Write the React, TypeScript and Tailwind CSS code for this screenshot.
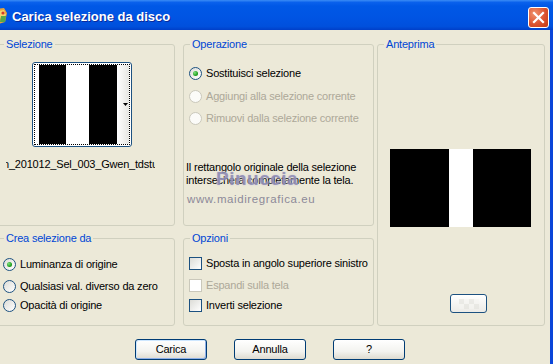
import React from "react";

function Radio({ checked = false, disabled = false }: { checked?: boolean; disabled?: boolean }) {
  return (
    <span
      className={
        disabled
          ? "w-[13px] h-[13px] rounded-full border border-[#cac8bb] bg-[#fbfbf8] flex items-center justify-center shrink-0"
          : "w-[13px] h-[13px] rounded-full border border-[#1c5180] bg-[linear-gradient(135deg,#dcdcd7,#ffffff)] flex items-center justify-center shrink-0"
      }
    >
      {checked && (
        <span className="w-[5px] h-[5px] rounded-full bg-[radial-gradient(circle_at_35%_35%,#7fe07f,#21a121_60%,#0e7a0e)]" />
      )}
    </span>
  );
}

function Check({ disabled = false }: { disabled?: boolean }) {
  return (
    <span
      className={
        disabled
          ? "w-[13px] h-[13px] border border-[#cac8bb] bg-white shrink-0"
          : "w-[13px] h-[13px] border border-[#1c5180] bg-[linear-gradient(135deg,#dcdcd7,#ffffff)] shrink-0"
      }
    />
  );
}

function Legend({ children }: { children: React.ReactNode }) {
  return <legend className="ml-[6px] px-[2px] leading-[13px] text-[#0046d5]">{children}</legend>;
}

function XPButton({ children, def = false }: { children: React.ReactNode; def?: boolean }) {
  return (
    <div
      className={
        def
          ? "w-[72px] h-[21px] border border-[#003c74] rounded-[3px] bg-[linear-gradient(180deg,#ffffff,#f3f3ef_60%,#dedbd0)] shadow-[inset_1px_1px_0_#cee7ff,inset_-1px_-1px_0_#8fb0e8] flex items-center justify-center text-black"
          : "w-[72px] h-[21px] border border-[#003c74] rounded-[3px] bg-[linear-gradient(180deg,#ffffff,#f3f3ef_60%,#dedbd0)] flex items-center justify-center text-black"
      }
    >
      {children}
    </div>
  );
}

export default function App() {
  return (
    <div className="w-[553px] h-[364px] overflow-hidden flex flex-col bg-[#ece9d8] font-['Liberation_Sans',Arial,sans-serif] text-[11px] tracking-[-0.2px] text-black">
      {/* Title bar */}
      <div className="h-[30px] shrink-0 flex items-start bg-[linear-gradient(180deg,#3b8cf5_0%,#0a61ec_8%,#0058e6_20%,#0054e3_60%,#0050dc_88%,#003fc8_100%)]">
        <svg width="16" height="18" viewBox="0 0 16 18" className="ml-[-8px] mt-[7px] shrink-0">
          <path d="M3 2 L12 1 L15 6 L13 15 L6 17 L1 11 Z" fill="#e8a33a" />
          <path d="M6 4 L12 3 L14 8 L10 12 L5 10 Z" fill="#f6d36b" />
          <path d="M9 9 L14 9 L13 15 L8 15 Z" fill="#57a84a" />
          <circle cx="11" cy="6" r="1.6" fill="#d23b2a" />
        </svg>
        <div className="ml-[4px] mt-[9px] text-[13px] leading-[15px] font-bold text-white tracking-[0px] [text-shadow:1px_1px_0_#0a2a9a]">
          Carica selezione da disco
        </div>
        <div className="flex-1" />
        <div className="mt-[7px] mr-[4px] w-[21px] h-[21px] rounded-[3px] border border-white bg-[radial-gradient(circle_at_30%_30%,#f0946e,#dc5330_55%,#c23a12)] flex items-center justify-center">
          <svg width="13" height="13" viewBox="0 0 13 13">
            <path d="M2 2 L11 11 M11 2 L2 11" stroke="white" strokeWidth="2.2" strokeLinecap="square" />
          </svg>
        </div>
      </div>

      {/* Body */}
      <div className="flex-1 flex border-r-[3px] border-[#0b45d9]">
        <div className="flex-1 flex flex-col pt-[8px]">
          <div className="flex">
            {/* Left column */}
            <div className="ml-[-3px] w-[178px] flex flex-col gap-[6px] shrink-0">
              <fieldset className="h-[188px] border border-[#d0d0bf] rounded-[3px]">
                <Legend>Selezione</Legend>
                <div className="flex flex-col">
                  <div className="ml-[34px] mt-[11px] w-[100px] h-[85px] border border-[#1c5180] rounded-[3px] bg-white p-[1px]">
                    <div className="w-full h-full border border-dotted border-black flex pl-[4px]">
                      <div className="w-[27px] bg-black" />
                      <div className="w-[23px] bg-white" />
                      <div className="w-[28px] bg-black" />
                      <div className="flex-1 bg-[linear-gradient(90deg,#ffffff,#e6e6e2)] flex items-center justify-end pr-[1px]">
                        <svg width="5" height="3" viewBox="0 0 5 3">
                          <path d="M0 0 H5 L2.5 3 Z" fill="#000" />
                        </svg>
                      </div>
                    </div>
                  </div>
                  <div className="ml-[8px] mt-[11px] w-[149px] overflow-hidden whitespace-nowrap leading-[13px]">
                    <span className="ml-[-3px]">n_201012_Sel_003_Gwen_tdstudio</span>
                  </div>
                </div>
              </fieldset>
              <fieldset className="h-[94px] border border-[#d0d0bf] rounded-[3px]">
                <Legend>Crea selezione da</Legend>
                <div className="flex flex-col pl-[5px]">
                  <div className="mt-[13px] h-[13px] flex items-center gap-[4px]">
                    <Radio checked />
                    <span className="leading-[13px]">Luminanza di origine</span>
                  </div>
                  <div className="mt-[9px] h-[13px] flex items-center gap-[4px]">
                    <Radio />
                    <span className="leading-[13px]">Qualsiasi val. diverso da zero</span>
                  </div>
                  <div className="mt-[6px] h-[13px] flex items-center gap-[4px]">
                    <Radio />
                    <span className="leading-[13px]">Opacità di origine</span>
                  </div>
                </div>
              </fieldset>
            </div>

            {/* Middle column */}
            <div className="ml-[8px] w-[191px] flex flex-col gap-[6px] shrink-0">
              <fieldset className="relative h-[188px] border border-[#d0d0bf] rounded-[3px]">
                <Legend>Operazione</Legend>
                <div className="flex flex-col pl-[5px]">
                  <div className="mt-[16px] h-[13px] flex items-center gap-[4px]">
                    <Radio checked />
                    <span className="leading-[13px]">Sostituisci selezione</span>
                  </div>
                  <div className="mt-[10px] h-[13px] flex items-center gap-[4px]">
                    <Radio disabled />
                    <span className="leading-[13px] text-[#aca899]">Aggiungi alla selezione corrente</span>
                  </div>
                  <div className="mt-[9px] h-[13px] flex items-center gap-[4px]">
                    <Radio disabled />
                    <span className="leading-[13px] text-[#aca899]">Rimuovi dalla selezione corrente</span>
                  </div>
                  <div className="ml-[-3px] mt-[36px] leading-[13px] whitespace-nowrap">
                    Il rettangolo originale della selezione
                    <br />
                    intersecherà completamente la tela.
                  </div>
                </div>
                <div className="absolute left-[32px] top-[118px] text-[19px] font-bold tracking-[0.5px] text-[#7d7aa8]/70 leading-[20px] [text-shadow:0_0_2px_#c8c6dc]">
                  Pinuccia
                </div>
                <div className="absolute left-[3px] top-[142px] text-[11.5px] tracking-[0.6px] text-[#8c8a98] leading-[13px]">
                  www.maidiregrafica.eu
                </div>
              </fieldset>
              <fieldset className="h-[94px] border border-[#d0d0bf] rounded-[3px]">
                <Legend>Opzioni</Legend>
                <div className="flex flex-col pl-[5px]">
                  <div className="mt-[12px] h-[13px] flex items-center gap-[4px]">
                    <Check />
                    <span className="leading-[13px]">Sposta in angolo superiore sinistro</span>
                  </div>
                  <div className="mt-[9px] h-[13px] flex items-center gap-[4px]">
                    <Check disabled />
                    <span className="leading-[13px] text-[#aca899]">Espandi sulla tela</span>
                  </div>
                  <div className="mt-[7px] h-[13px] flex items-center gap-[4px]">
                    <Check />
                    <span className="leading-[13px]">Inverti selezione</span>
                  </div>
                </div>
              </fieldset>
            </div>

            {/* Right column */}
            <div className="ml-[3px] w-[168px] shrink-0">
              <fieldset className="h-[288px] border border-[#d0d0bf] rounded-[3px]">
                <Legend>Anteprima</Legend>
                <div className="flex flex-col">
                  <div className="ml-[12px] mt-[98px] w-[141px] h-[78px] flex">
                    <div className="w-[59px] bg-black" />
                    <div className="w-[24px] bg-white" />
                    <div className="flex-1 bg-black" />
                  </div>
                  <div className="ml-[72px] mt-[67px] w-[37px] h-[19px] border border-[#1c5180] rounded-[3px] bg-[linear-gradient(180deg,#ffffff,#ecebe6)] flex items-center justify-center">
                    <div className="w-[20px] h-[10px] bg-[repeating-conic-gradient(#f4f4f0_0%_25%,#e2e2dc_0%_50%)] bg-[length:10px_10px] opacity-60" />
                  </div>
                </div>
              </fieldset>
            </div>
          </div>

          {/* Buttons */}
          <div className="flex mt-[13px] pl-[135px] gap-[27px]">
            <XPButton def>Carica</XPButton>
            <XPButton>Annulla</XPButton>
            <XPButton>?</XPButton>
          </div>
        </div>
      </div>
    </div>
  );
}
